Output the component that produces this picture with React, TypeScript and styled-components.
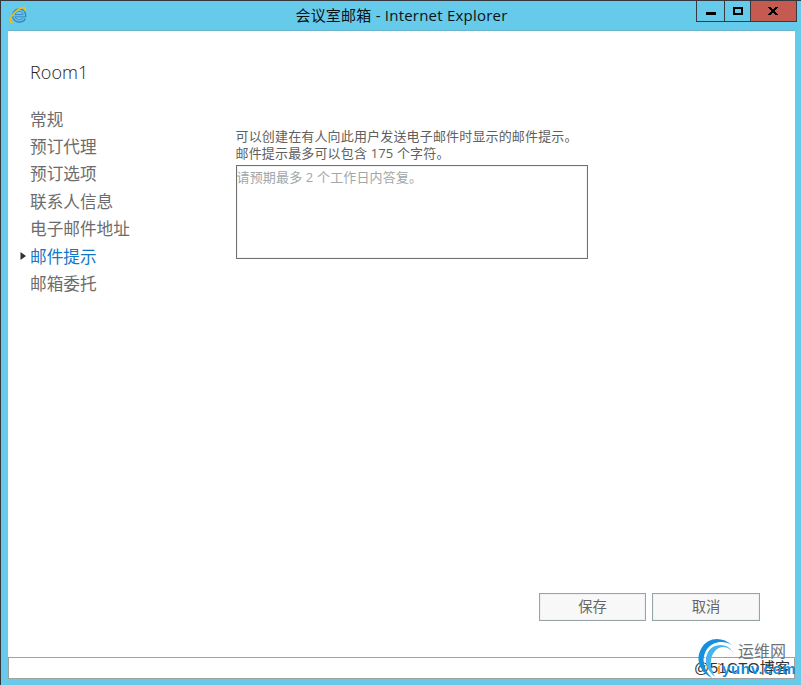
import React from "react";
import styled, { createGlobalStyle, css } from "styled-components";

const Global = createGlobalStyle`
  * { box-sizing: border-box; }
  html, body { margin: 0; height: 100%; overflow: hidden; }
  body { font-family: "Open Sans", "Noto Sans CJK SC", sans-serif; }
`;

const Window = styled.div`
  position: relative;
  display: flex;
  flex-direction: column;
  width: 801px;
  height: 685px;
  padding: 0 6px 6px 7px;
  background: #66caea;
  border-top: 1px solid #34373d;
  border-left: 1px solid #34373d;
`;

const TitleBar = styled.header`
  display: grid;
  grid-template-columns: 100px 1fr 100px;
  height: 29px;
  margin-right: -2px;
  flex: none;
`;

const AppIcon = styled.svg`
  width: 19px;
  height: 18px;
  margin: 5px 0 0 1px;
`;

const Title = styled.h1`
  margin: 0;
  padding-right: 2px;
  font-size: 15px;
  font-weight: 400;
  line-height: 28px;
  text-align: center;
  white-space: nowrap;
  color: #0b1216;
  letter-spacing: 0.22px;
`;

const Controls = styled.div`
  display: flex;
  justify-content: flex-end;
`;

const Control = styled.button<{ $width: number; $close?: boolean }>`
  display: flex;
  align-items: center;
  justify-content: center;
  flex: none;
  width: ${(p) => p.$width}px;
  height: 21px;
  padding: 0 ${(p) => (p.$close ? 1 : 0)}px 0 0;
  border: 1px solid #3b3940;
  border-top: 0;
  margin-left: -1px;
  background: ${(p) => (p.$close ? "#c45a50" : "transparent")};
`;

const Page = styled.main`
  display: flex;
  flex-direction: column;
  flex: 1;
  min-height: 0;
  background: #fff;
  border-top: 1px solid #6bb5cc;
`;

const Heading = styled.h2`
  margin: 0;
  padding: 28px 0 0 22px;
  height: 74px;
  font-size: 18px;
  line-height: 26px;
  font-weight: 300;
  letter-spacing: 0.1px;
  color: #222;
`;

const Body = styled.div`
  display: flex;
  flex: 1;
`;

const Nav = styled.nav`
  display: flex;
  flex-direction: column;
  width: 228px;
  padding-top: 0.4px;
`;

const NavItem = styled.a<{ $active?: boolean }>`
  display: flex;
  align-items: center;
  height: 27.45px;
  padding-left: 22px;
  font-size: 16.65px;
  line-height: 27px;
  color: #6c6c6c;
  ${(p) =>
    p.$active &&
    css`
      padding-left: 12px;
      color: #1078c6;
    `}
`;

const Marker = styled.svg`
  width: 6px;
  height: 10px;
  margin-right: 4px;
`;

const Form = styled.section`
  width: 352px;
  padding-top: 23px;
  font-size: 13px;
  line-height: 17px;
  color: #606060;
`;

const Hint = styled.p`
  margin: 0 0 3px -0.5px;
  white-space: nowrap;
  letter-spacing: 0.16px;
`;

const TipBox = styled.div`
  height: 94px;
  padding: 3px 0;
  border: 1px solid #707070;
  box-shadow: inset 0 0 0 1px #f3f3f3;
  color: #a0a7a9;
  letter-spacing: 0.16px;
  text-indent: -0.5px;
`;

const Actions = styled.footer`
  display: flex;
  justify-content: flex-end;
  gap: 6px;
  height: 64px;
  padding-right: 35px;
`;

const ActionButton = styled.button<{ $width: number }>`
  width: ${(p) => p.$width}px;
  height: 28px;
  padding: 0;
  border: 1px solid #96a5a6;
  background: #f8f8f8;
  box-shadow: inset 0 0 0 1px #f0f0f4;
  font-family: inherit;
  font-size: 14.3px;
  line-height: 24px;
  color: #666;
`;

const StatusBar = styled.div`
  height: 22px;
  flex: none;
  border: 1px solid #a0a0a0;
`;

const Watermark = styled.div`
  position: absolute;
  left: 693px;
  top: 636px;
  width: 107px;
  height: 44px;
  white-space: nowrap;
`;

const Swirl = styled.svg`
  position: absolute;
  left: 3px;
  top: 0;
  width: 40px;
  height: 42px;
`;

const SiteName = styled.span`
  position: absolute;
  left: 44px;
  top: 4px;
  font-size: 16px;
  line-height: 20px;
  color: #6f7378;
`;

const BlogName = styled.span`
  position: absolute;
  left: 0;
  top: 21px;
  font: 15px/20px "Liberation Sans", "Noto Sans CJK SC", sans-serif;
  letter-spacing: 0.4px;
  color: #333;
`;

const SiteUrl = styled.span`
  position: absolute;
  left: 23px;
  top: 23px;
  font: 700 15px/18px "Liberation Sans", sans-serif;
  letter-spacing: 0.7px;
  color: #168ddd;
`;

const FirstLetter = styled.span`
  color: #f39a2b;
`;

const sections = ["常规", "预订代理", "预订选项", "联系人信息", "电子邮件地址", "邮件提示", "邮箱委托"];
const current = "邮件提示";

function ExplorerIcon() {
  return (
    <AppIcon viewBox="0 0 19 18">
      <path d="M5.4 9.6H15.6C15.5 6 13.3 4 10.4 4C7.1 4 4.6 6.4 4.6 9.6C4.6 12.8 7.1 15 10.3 15C12.8 15 14.5 13.9 15.3 12.2" fill="none" stroke="#2a83bd" strokeWidth="3.4" />
      <path d="M5.4 9.6H15.3C15.2 6.2 13.3 4.3 10.4 4.3C7.3 4.3 4.9 6.6 4.9 9.6C4.9 12.6 7.3 14.7 10.3 14.7C12.7 14.7 14.2 13.7 15 12.2" fill="none" stroke="#68bce8" strokeWidth="1.7" />
      <path d="M3.8 16.2C-.4 16.9 1 11.3 5.2 7C9.5 2.5 15.2-.1 16.1 2.3C16.4 3 16.1 4 15.6 4.8" fill="none" stroke="#f5bd12" strokeWidth="1.7" />
    </AppIcon>
  );
}

export default function App() {
  return (
    <>
      <Global />
      <Window>
        <TitleBar>
          <ExplorerIcon />
          <Title>会议室邮箱 - Internet Explorer</Title>
          <Controls>
            <Control $width={29} aria-label="最小化">
              <svg width="10" height="10" shapeRendering="crispEdges"><path d="M0 6h10v3H0z" /></svg>
            </Control>
            <Control $width={27} aria-label="最大化">
              <svg width="10" height="8" shapeRendering="crispEdges"><path d="M1 1h8v6H1z" fill="none" stroke="#000" strokeWidth="2" /></svg>
            </Control>
            <Control $width={47} $close aria-label="关闭">
              <svg width="10" height="8" shapeRendering="crispEdges">
                <path d="M0 0h3v1h1v1h2v-1h1v-1h3v1h-1v1h-1v1h-1v2h1v1h1v1h1v1h-3v-1h-1v-1h-2v1h-1v1h-3v-1h1v-1h1v-1h1v-2h-1v-1h-1v-1h-1z" />
              </svg>
            </Control>
          </Controls>
        </TitleBar>
        <Page>
          <Heading>Room1</Heading>
          <Body>
            <Nav>
              {sections.map((name) => (
                <NavItem key={name} $active={name === current}>
                  {name === current && (
                    <Marker viewBox="0 0 6 10"><path d="M.5 1L6 5L.5 9Z" fill="#333" /></Marker>
                  )}
                  {name}
                </NavItem>
              ))}
            </Nav>
            <Form>
              <Hint>
                可以创建在有人向此用户发送电子邮件时显示的邮件提示。
                <br />
                邮件提示最多可以包含 175 个字符。
              </Hint>
              <TipBox>请预期最多 2 个工作日内答复。</TipBox>
            </Form>
          </Body>
          <Actions>
            <ActionButton $width={107}>保存</ActionButton>
            <ActionButton $width={108}>取消</ActionButton>
          </Actions>
          <StatusBar />
        </Page>
        <Watermark>
          <BlogName>@51CTO博客</BlogName>
          <Swirl viewBox="0 0 40 42">
            <path d="M35 8C25-1 10 0 4 12C-2 23 3 35 15 41C6 32 4 21 10 12C16 4 27 3 35 8Z" fill="#168fdc" />
            <path d="M37 17C31 5 17 5 11 15C6 25 10 33 18 40C13 30 12 21 18 14C24 7 33 10 37 17Z" fill="#45b5ed" />
            <path d="M8 26C7 13 17 4 31 9" fill="none" stroke="#fff" strokeWidth="1" />
          </Swirl>
          <SiteName>运维网</SiteName>
          <SiteUrl><FirstLetter>i</FirstLetter>yunv.com</SiteUrl>
        </Watermark>
      </Window>
    </>
  );
}
